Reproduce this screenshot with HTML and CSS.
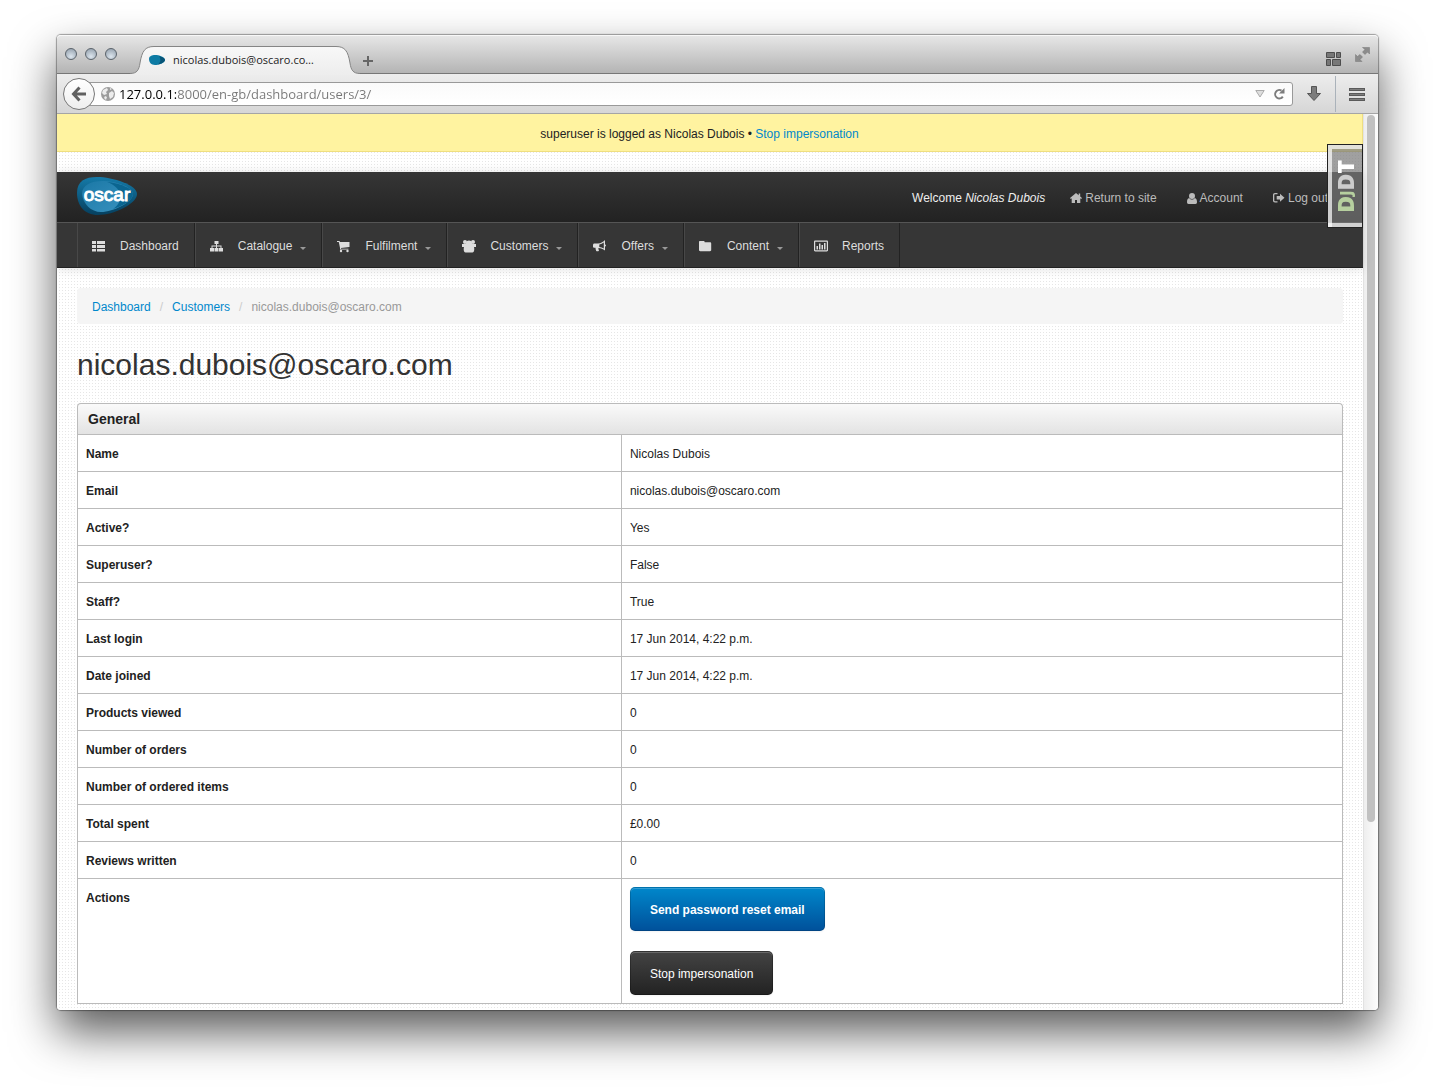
FILE: index.html
```html
<!DOCTYPE html>
<html lang="en-gb">
<head>
<meta charset="utf-8">
<title>nicolas.dubois@oscaro.com</title>
<link rel="stylesheet" href="styles.css">
</head>
<body>
<div class="window">
  <div class="titlebar">
    <div class="lights"><button class="light" aria-label="Close"></button><button class="light" aria-label="Minimise"></button><button class="light" aria-label="Zoom"></button></div>
    <div class="tab">
      <svg class="tab-shape" viewBox="0 0 230 30" aria-hidden="true"><defs><linearGradient id="tabfill" x1="0" y1="0" x2="0" y2="1"><stop offset="0" stop-color="#f8f8f8"/><stop offset="1" stop-color="#ededed"/></linearGradient></defs><path d="M0 30V28.500C7 28.500 9 25 10 18C12 6 15 1.500 24 1.500H206C215 1.500 218 6 220 18C221 25 223 28.500 230 28.500V30Z" fill="url(#tabfill)"/><path d="M0 28.500C7 28.500 9 25 10 18C12 6 15 1.500 24 1.500H206C215 1.500 218 6 220 18C221 25 223 28.500 230 28.500" fill="none" stroke="#858585"/></svg>
      <svg class="favicon" viewBox="0 0 16 10" aria-hidden="true"><path d="M0 4C0 1 3 0 6 0C10 0 16 2 16 5C16 8 9 10 6 10C2 10 0 7 0 4Z" fill="#0d7ba4"/><path d="M10 1C13 2 16 3 16 5C16 7 12 9 9 9.500C12 7 12 4 10 1Z" fill="#075477"/></svg>
      <span class="tab-title">nicolas.dubois@oscaro.co…</span>
    </div>
    <button class="icon-btn new-tab" aria-label="New tab"><svg width="12" height="12" viewBox="0 0 12 12"><path d="M6 1V11M1 6H11" stroke="#666" stroke-width="2"/></svg></button>
    <button class="icon-btn groups" aria-label="Tab groups"><svg width="15" height="15" viewBox="0 0 15 15"><g fill="#777" stroke="#4d4d4d"><path d="M.5 1.500H8.500V6.500H.5ZM10.500 1.500H14.500V6.500H10.500ZM.5 8.500H4.500V14.500H.5ZM6.500 8.500H14.500V14.500H6.500Z"/></g></svg></button>
    <button class="icon-btn full" aria-label="Full screen"><svg width="15" height="15" viewBox="0 0 15 15"><path d="M7.500 .5H14.500V7L12.500 5L10 7.500L7.500 5L10 2.500ZM.5 7.500L2.500 9.500L5 7.500L7.500 10L5 12.500L7 14.500H.5Z" fill="#8c8c8c" stroke="#777" stroke-width=".5"/></svg></button>
  </div>
  <div class="toolbar">
    <button class="back" aria-label="Back"><svg width="16" height="16" viewBox="0 0 16 16"><path d="M8.500 1.500L2.500 8L8.500 14.500M3 8H15" fill="none" stroke="#606060" stroke-width="3"/></svg></button>
    <div class="urlbar">
      <svg width="14" height="14" viewBox="0 0 14 14" aria-hidden="true"><circle cx="7" cy="7" r="7" fill="#9c9c9c"/><path d="M2 3L6 1L7 3L5 5L6 7L3 8L1 6ZM8 6L11 4L13 6L12 10L9 12L8 9ZM4 9L6 10L5 13L3 11ZM9 1L11 2L9 3Z" fill="#ececec"/></svg>
      <input class="url" type="text" aria-label="Address" value="127.0.0.1:8000/en-gb/dashboard/users/3/">
      <button class="icon-btn" aria-label="History"><svg width="10" height="8" viewBox="0 0 10 8"><path d="M.8 .5H9.200L5 7Z" fill="#ddd" stroke="#aaa"/></svg></button>
      <button class="icon-btn" aria-label="Reload"><svg width="12" height="12" viewBox="0 0 12 12"><path d="M8.500 2.600A4.200 4.200 0 1 0 9.800 8.600" fill="none" stroke="#7c7c7c" stroke-width="2"/><path d="M11.500 0V5.500H6Z" fill="#7c7c7c"/></svg></button>
    </div>
    <button class="icon-btn download" aria-label="Downloads"><svg width="14" height="15" viewBox="0 0 14 15"><path d="M4.500 .5H9.500V7.500H13.500L7 14.500L.5 7.500H4.500Z" fill="#7c7c7c" stroke="#555"/></svg></button>
    <button class="icon-btn menu" aria-label="Menu"><svg width="16" height="14" viewBox="0 0 16 14"><path d="M0 1.500H16M0 6.500H16M0 11.500H16" stroke="#5a5a5a" stroke-width="3"/><path d="M1 1.500H15M1 6.500H15M1 11.500H15" stroke="#7d7d7d"/></svg></button>
  </div>
  <div class="viewport">
    <div class="page">
      <div class="notice">superuser is logged as Nicolas Dubois • <a href="#">Stop impersonation</a></div>
      <header class="header">
        <div class="brandbar">
          <a class="brand" href="#" aria-label="oscar">
            <svg class="brand-shape" viewBox="0 0 60 38" aria-hidden="true"><defs><linearGradient id="b1" x1="0" y1="0" x2="0" y2="1"><stop offset="0" stop-color="#157aa8"/><stop offset="1" stop-color="#06405f"/></linearGradient><linearGradient id="b2" x1="0" y1="0" x2="1" y2="1"><stop offset="0" stop-color="#1b78a6"/><stop offset="1" stop-color="#3a93c0"/></linearGradient></defs><path d="M0 16C0 4 8 0 20 0C36 0 60 8 60 17C60 27 36 38 21 38C7 38 0 28 0 16Z" fill="url(#b1)"/><path d="M5 17C5 8 14 4 25 4C38 4 56 10 56 17C56 25 36 35 24 35C14 35 6 27 5 17Z" fill="url(#b2)"/><path d="M30 5C42 6 56 11 56 17C56 23 46 29 36 32C48 24 45 10 30 5Z" fill="#0b6590"/></svg>
            <span class="brand-name">oscar</span>
          </a>
          <span class="welcome">Welcome <em>Nicolas Dubois</em></span>
          <nav class="account">
            <a href="#"><svg width="12" height="10" viewBox="0 0 12 10"><path d="M6 0L0 5L.8 6L1.700 5.300V10H5V7H7V10H10.300V5.300L11.200 6L12 5L10.200 3.500V.5H8.700V2.200Z"/></svg>Return to site</a>
            <a href="#"><svg width="10" height="11" viewBox="0 0 10 11"><path d="M5 0C7 0 8 1.300 8 3S7 6 5 6S2 4.700 2 3S3 0 5 0ZM2.200 5C3.500 7 6.500 7 7.800 5C9.300 5.300 10 7 10 9C10 10.300 9.500 11 8.500 11H1.500C.5 11 0 10.300 0 9C0 7 .7 5.300 2.200 5Z"/></svg>Account</a>
            <a href="#"><svg width="12" height="10" viewBox="0 0 12 10"><path d="M4.500 0V1.300H2C1.500 1.300 1.300 1.500 1.300 2V7.500C1.300 8 1.500 8.200 2 8.200H4.500V9.500H2C.7 9.500 0 8.800 0 7.500V2C0 .7 .7 0 2 0ZM7 .8L11.500 4.700L7 8.700V6.500H3.700V3H7Z"/></svg>Log out</a>
          </nav>
        </div>
        <nav class="nav">
          <a href="#"><svg viewBox="0 0 14 14"><path d="M0 2H4V5H0ZM5 2H13V5H5ZM0 6H4V9H0ZM5 6H13V9H5ZM0 10H4V12.500H0ZM5 10H13V12.500H5Z"/></svg>Dashboard</a>
          <a href="#"><svg viewBox="0 0 14 14"><path d="M4.500 2H8.500V5H7V6.500H11.500V9H13V12.500H9V9H10.500V7.500H7V9H8.500V12.500H4.500V9H6V7.500H2.500V9H4V12.500H0V9H1.500V6.500H6V5H4.500Z"/></svg>Catalogue<i class="caret"></i></a>
          <a href="#"><svg viewBox="0 0 14 14"><path d="M0 2H2.500L3 3H12.500V8L4 9V9.800H11.500V10.600H3V9L1.800 3H0Z"/><circle cx="4" cy="12" r="1.200"/><circle cx="10.500" cy="12" r="1.200"/></svg>Fulfilment<i class="caret"></i></a>
          <a href="#"><svg viewBox="0 0 14 14"><circle cx="3" cy="3" r="2"/><circle cx="11" cy="3" r="2"/><circle cx="7" cy="4.500" r="3"/><path d="M0 5H5V7H9V5H14V8H12C12.500 9.500 12.500 13.500 10.500 13.500H3.500C1.500 13.500 1.500 9.500 2 8H0Z"/></svg>Customers<i class="caret"></i></a>
          <a href="#"><svg viewBox="0 0 14 14"><path fill-rule="evenodd" d="M12 1V5.500C13.300 5.500 13.300 7.500 12 7.500V11.500C10 9.800 8 9 5.500 8.900C5 10.200 6 10.500 6 11.500C5.500 12.500 4 12.500 3.200 12C3 11 2.300 10 2.600 8.800H1.500C.5 8.800 0 8.300 0 7.500V6C0 5.200 .5 4.500 1.500 4.500H5C8 4.500 10.500 2.500 12 1ZM10.800 3.500C9.500 4.500 8 5.200 6.300 5.500V8C8 8.200 9.500 8.800 10.800 9.600Z"/></svg>Offers<i class="caret"></i></a>
          <a href="#"><svg viewBox="0 0 14 14"><path d="M1 2H4.500C5.200 2 5.700 2.500 5.700 3.300H11C11.700 3.300 12.200 3.800 12.200 4.500V11C12.200 11.700 11.700 12.200 11 12.200H1.200C.5 12.200 0 11.700 0 11V3C0 2.400 .4 2 1 2Z"/></svg>Content<i class="caret"></i></a>
          <a href="#"><svg viewBox="0 0 14 14"><path fill-rule="evenodd" d="M1.200 1.500H12.800C13.500 1.500 14 2 14 2.700V11.300C14 12 13.500 12.500 12.800 12.500H1.200C.5 12.500 0 12 0 11.300V2.700C0 2 .5 1.500 1.200 1.500ZM1.200 2.700V11.300H12.800V2.700Z"/><path d="M2.500 7H4V10.500H2.500ZM5 4.500H6.500V10.500H5ZM7.500 6H9V10.500H7.500ZM10 4H11.500V10.500H10Z"/></svg>Reports</a>
        </nav>
      </header>
      <main class="content">
        <ol class="breadcrumb"><li><a href="#">Dashboard</a></li><li><a href="#">Customers</a></li><li>nicolas.dubois@oscaro.com</li></ol>
        <h1>nicolas.dubois@oscaro.com</h1>
        <table class="details">
          <caption>General</caption>
          <tbody>
            <tr><th scope="row">Name</th><td>Nicolas Dubois</td></tr>
            <tr><th scope="row">Email</th><td>nicolas.dubois@oscaro.com</td></tr>
            <tr><th scope="row">Active?</th><td>Yes</td></tr>
            <tr><th scope="row">Superuser?</th><td>False</td></tr>
            <tr><th scope="row">Staff?</th><td>True</td></tr>
            <tr><th scope="row">Last login</th><td>17 Jun 2014, 4:22 p.m.</td></tr>
            <tr><th scope="row">Date joined</th><td>17 Jun 2014, 4:22 p.m.</td></tr>
            <tr><th scope="row">Products viewed</th><td>0</td></tr>
            <tr><th scope="row">Number of orders</th><td>0</td></tr>
            <tr><th scope="row">Number of ordered items</th><td>0</td></tr>
            <tr><th scope="row">Total spent</th><td>£0.00</td></tr>
            <tr><th scope="row">Reviews written</th><td>0</td></tr>
            <tr><th scope="row">Actions</th><td class="actions-cell"><div class="actions"><button class="btn btn-primary">Send password reset email</button><button class="btn btn-dark">Stop impersonation</button></div></td></tr>
          </tbody>
        </table>
      </main>
      <button class="djdt" aria-label="Show debug toolbar"><span class="djdt-text"><span class="dj">D<small>J</small></span><span class="d">D</span>T</span></button>
    </div>
    <div class="scrollbar"><div class="thumb"></div></div>
  </div>
</div>
</body>
</html>
```
FILE: styles.css
```css
* { box-sizing: border-box; }
body {
  margin: 0;
  min-height: 100vh;
  padding: 35px 57px 79px;
  display: flex;
  background: #fff;
  font: 12px/20px "Liberation Sans", Arial, sans-serif;
  color: #222;
}
a { color: #08c; text-decoration: none; }
button { font: inherit; cursor: pointer; }

.window {
  flex: 1;
  min-width: 0;
  display: flex;
  flex-direction: column;
  border-radius: 4px;
  box-shadow: 0 0 1px 1px rgba(0, 0, 0, .35), 0 22px 46px rgba(0, 0, 0, .65);
}

/* Browser chrome */
.titlebar {
  display: flex;
  height: 39px;
  padding: 0 8px;
  background: linear-gradient(#e6e6e6, #b4b4b4);
  border-top: 1px solid #f8f8f8;
  border-bottom: 1px solid #777;
  border-radius: 4px 4px 0 0;
}
.lights { display: flex; gap: 8px; padding-top: 12px; }
.light {
  width: 12px;
  height: 12px;
  padding: 0;
  border: 1px solid #5b636b;
  border-radius: 50%;
  background: radial-gradient(circle at 50% 75%, #dde6ee, #8d9aa7);
}
.tab {
  position: relative;
  display: flex;
  align-items: center;
  gap: 8px;
  width: 230px;
  height: 30px;
  margin: 9px 0 0 13px;
  padding: 0 19px;
}
.tab-shape { position: absolute; inset: 0; width: 100%; height: 100%; }
.favicon { position: relative; width: 16px; height: 10px; }
.tab-title { position: relative; font: 11px/16px "Open Sans", sans-serif; color: #222; white-space: nowrap; }
.icon-btn { display: flex; padding: 0; border: 0; background: none; align-items: center; }
.new-tab { padding-top: 12px; margin-left: 2px; }
.groups { margin-left: auto; padding-top: 8px; }
.full { margin: 0 0 0 14px; }

.toolbar {
  display: flex;
  align-items: center;
  height: 40px;
  padding: 0 13px 0 6px;
  background: linear-gradient(#ededed, #d6d6d6);
  border-bottom: 1px solid #a5a5a5;
}
.back {
  position: relative;
  z-index: 1;
  display: flex;
  align-items: center;
  justify-content: center;
  width: 32px;
  height: 32px;
  padding: 0;
  border: 1px solid #777;
  border-radius: 50%;
  background: linear-gradient(#fff, #eee);
}
.urlbar {
  flex: 1;
  display: flex;
  align-items: center;
  gap: 8px;
  height: 24px;
  margin-left: -8px;
  padding: 0 7px 0 13px;
  border: 1px solid #999;
  border-radius: 0 3px 3px 0;
  background: linear-gradient(#fafafa, #fff);
}
.url {
  flex: 1;
  min-width: 0;
  height: 20px;
  margin-left: -4px;
  padding: 0;
  border: 0;
  outline: 0;
  font: 13px/20px "Open Sans", sans-serif;
  /* host in black, the rest of the address in grey */
  background: linear-gradient(90deg, #000 57px, #777 57px);
  -webkit-background-clip: text;
  background-clip: text;
  color: transparent;
}
.download { margin: 0 14px; }
.menu { height: 36px; padding: 2px 0 0 13px; border-left: 1px solid #aab2ba; }

/* Page */
.viewport { flex: 1; display: flex; border-radius: 0 0 4px 4px; overflow: hidden; }
.page {
  position: relative;
  flex: 1;
  min-width: 0;
  /* one grey dot in every 3px square */
  background:
    linear-gradient(90deg, #fff 2px, transparent 2px) 0 0 / 3px 3px,
    linear-gradient(#fff 2px, #e6e6e6 2px) 0 0 / 3px 3px;
}
.scrollbar {
  width: 15px;
  padding: 1px 3px 0 3px;
  background: linear-gradient(90deg, #eee, #fdfdfd);
  border-left: 1px solid #e2e2e2;
}
.thumb { height: 79%; border-radius: 4px; background: #c1c1c1; }

.notice {
  padding: 10px 40px 7px 20px;
  text-align: center;
  background: #fff3a0;
  border: solid #efdf80;
  border-width: 0 1px 1px 0;
}
.header { margin-top: 20px; box-shadow: 0 1px 10px rgba(0, 0, 0, .12); }
.brandbar {
  display: flex;
  align-items: center;
  height: 50px;
  padding: 2px 20px 0;
  background: linear-gradient(#363636, #222);
}
.brand { position: relative; display: flex; width: 60px; height: 38px; margin: 0 auto 4px 0; justify-content: center; align-items: center; }
.brand-shape { position: absolute; inset: 0; width: 100%; height: 100%; }
.brand-name { position: relative; padding-bottom: 2px; font-size: 19px; color: #fff; line-height: 34px; -webkit-text-stroke: 1px #fff; }
.welcome { color: #eee; padding-right: 10px; }
.account { display: flex; }
.account a { display: flex; align-items: center; gap: 3px; padding: 0 15px; color: #bbb; }
.account svg { fill: #bbb; }
.nav {
  display: flex;
  padding-left: 20px;
  background: #363636;
  border-top: 1px solid #555;
  border-bottom: 1px solid #222;
}
.nav a {
  display: flex;
  align-items: center;
  height: 44px;
  padding: 2px 15px 0 14px;
  color: #ddd;
  border-left: 1px solid #484848;
  box-shadow: 1px 0 0 #222;
  margin-right: 1px;
}
.nav svg { width: 14px; height: 14px; margin-right: 14px; fill: #ddd; }
.caret { margin: 4px 0 0 8px; border: solid transparent; border-width: 3px 3px 0; border-top-color: #999; }

.content { padding: 20px 20px 6px; }
.breadcrumb {
  display: flex;
  margin: 0 0 21px;
  padding: 9px 15px 7px;
  list-style: none;
  background: #f5f5f5;
  border-radius: 4px;
  color: #999;
}
.breadcrumb li + li::before { content: "/"; padding: 0 9px; color: #ccc; }
h1 { margin: 0 0 18px; font-size: 30px; line-height: 40px; font-weight: normal; color: #333; }

.details { width: 100%; border-collapse: collapse; background: #fff; }
.details caption {
  padding: 5px 10px;
  text-align: left;
  font-size: 14px;
  font-weight: bold;
  background: linear-gradient(#fafafa, #e3e3e3);
  border: 1px solid #bbb;
  border-bottom: 0;
  border-radius: 4px 4px 0 0;
}
.details th, .details td { padding: 9px 8px 7px; border: 1px solid #bbb; text-align: left; vertical-align: top; }
.details th { width: 43%; }
.details .actions-cell { padding: 8px; }
.actions { display: flex; flex-direction: column; align-items: flex-start; gap: 20px; }
.btn {
  padding: 12px 19px 10px;
  border: 1px solid;
  border-radius: 5px;
  color: #fff;
  box-shadow: inset 0 1px 0 rgba(255, 255, 255, .2), 0 1px 2px rgba(0, 0, 0, .05);
}
.btn-primary { font-weight: bold; background: linear-gradient(#08c, #00509a) border-box; border-color: rgba(0, 0, 0, .15); }
.btn-dark { background: linear-gradient(#444, #222) border-box; border-color: rgba(0, 0, 0, .25); }

/* Debug toolbar handle, floating over the page */
.djdt {
  position: absolute;
  top: 30px;
  right: 0;
  width: 36px;
  height: 84px;
  padding: 0;
  display: flex;
  border: 1px solid #222;
  background: rgba(120, 120, 120, .7);
  box-shadow: inset 4px 4px 0 rgba(255, 255, 255, .7), inset 0 -4px 0 rgba(255, 255, 255, .7);
  align-items: center;
  justify-content: center;
}
.djdt-text { writing-mode: vertical-rl; transform: rotate(180deg); font: 800 23px/30px "Open Sans", sans-serif; color: #fff; }
.djdt small { font-size: 15px; }
.dj { color: #b6cf9f; }
.d { color: #ccc; }
```
